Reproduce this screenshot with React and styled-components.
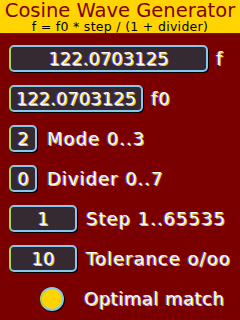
import React from "react";
import styled, { createGlobalStyle } from "styled-components";

const Global = createGlobalStyle`
  html, body {
    margin: 0;
    padding: 0;
    background: #7a0000;
  }
  body {
    font-family: "DejaVu Sans", sans-serif;
  }
`;

const Screen = styled.div`
  width: 240px;
  height: 320px;
  background: #7a0000;
  overflow: hidden;
`;

const Header = styled.div`
  box-sizing: border-box;
  background: #ffd400;
  height: 34px;
  border-bottom: 1px solid #5a2000;
  display: flex;
  flex-direction: column;
  align-items: center;
`;

const Title = styled.div`
  color: #800000;
  font-size: 19.5px;
  line-height: 21px;
  white-space: nowrap;
`;

const Formula = styled.div`
  color: #000;
  font-size: 12.5px;
  line-height: 12px;
  letter-spacing: 0.3px;
  white-space: nowrap;
`;

const List = styled.div`
  display: flex;
  flex-direction: column;
  gap: 13px;
  padding: 11px 0 0 9px;
`;

const Row = styled.div`
  display: flex;
  align-items: center;
  height: 27px;
  gap: ${(p) => p.$gap || 9}px;
`;

const glow = `
  color: #fff;
  text-shadow: -1px 0 #3a3aff, 1px 1px #ffd000;
`;

const Field = styled.div`
  box-sizing: border-box;
  width: ${(p) => p.$w}px;
  height: 27px;
  background: #352a31;
  border: 2px solid #86c8ee;
  border-left-color: #9ad860;
  border-radius: 5px;
  box-shadow: 1px 1px 0 #000;
  display: flex;
  align-items: center;
  justify-content: center;
  font-size: 18px;
  ${glow}
`;

const Label = styled.div`
  font-size: 18px;
  letter-spacing: ${(p) => p.$ls ?? 1}px;
  white-space: nowrap;
  ${glow}
`;

const Lamp = styled.div`
  box-sizing: border-box;
  width: 24px;
  height: 24px;
  margin-left: 31px;
  border-radius: 50%;
  background: #ffd400;
  border: 2px solid #86c8ee;
  border-left-color: #9ad860;
  box-shadow: 1px 1px 0 #000;
`;

const rows = [
  { value: "122.0703125", label: "f", w: 199, gap: 8 },
  { value: "122.0703125", label: "f0", w: 134, gap: 8 },
  { value: "2", label: "Mode 0..3", w: 28, gap: 10 },
  { value: "0", label: "Divider 0..7", w: 28, gap: 10 },
  { value: "1", label: "Step 1..65535", w: 68, gap: 9 },
  { value: "10", label: "Tolerance o/oo", w: 68, gap: 9 },
];

export default function App() {
  return (
    <Screen>
      <Global />
      <Header>
        <Title>Cosine Wave Generator</Title>
        <Formula>f = f0 * step / (1 + divider)</Formula>
      </Header>
      <List>
        {rows.map((r) => (
          <Row key={r.label} $gap={r.gap}>
            <Field $w={r.w}>{r.value}</Field>
            <Label>{r.label}</Label>
          </Row>
        ))}
        <Row $gap={20}>
          <Lamp />
          <Label $ls={0.5}>Optimal match</Label>
        </Row>
      </List>
    </Screen>
  );
}
